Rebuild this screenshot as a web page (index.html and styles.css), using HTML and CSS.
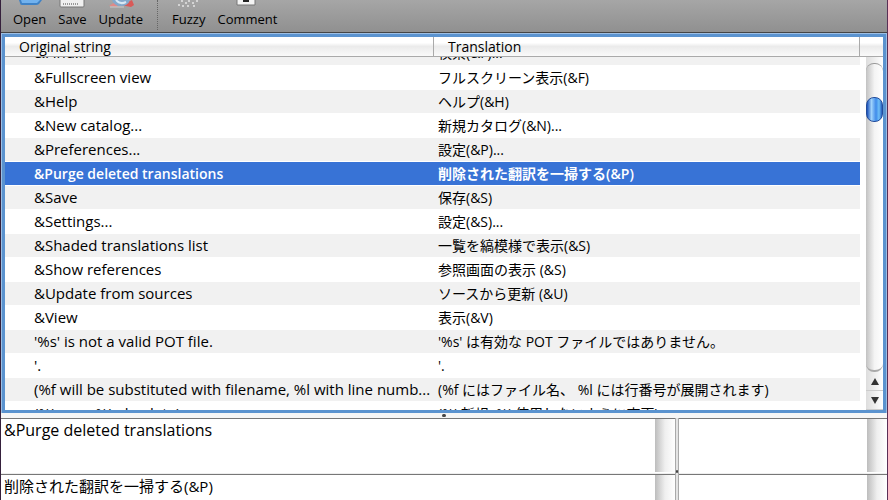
FILE: index.html
```html
<!DOCTYPE html>
<html lang="en">
<head>
<meta charset="utf-8">
<title>Catalog editor</title>
<link rel="stylesheet" href="styles.css">
</head>
<body>
<div class="window">
  <header class="toolbar">
    <button class="tool"><svg width="28" height="9" viewBox="1 0 28 9"><path d="M4 0H27L24 4Q23 5 21 5H7Q5 5 5 3Z" fill="#3f82c6"/><path d="M6 0H25L22 3H7Z" fill="#72b2ee"/></svg><span>Open</span></button>
    <button class="tool"><svg width="28" height="9" viewBox="1 0 28 9"><path d="M3 -1H27V6Q27 7 26 7H4Q3 7 3 6Z" fill="#f0f0f0" stroke="#777"/><path d="M6 4H21" stroke="#999" stroke-width="2" stroke-dasharray="1 1"/></svg><span>Save</span></button>
    <button class="tool"><svg width="28" height="9" viewBox="1 0 28 9"><path d="M15 5L26 0L28 5L25 7Z" fill="#d95a58"/><path d="M3 6L9 2L12 7Z" fill="#e08a88"/><path d="M6 0H24Q22 6 15 6Q8 6 6 0Z" fill="#83a9cc"/><path d="M10 0Q14 5 20 2" stroke="#d8e8f4" fill="none" stroke-width="2"/><path d="M4 7H18" stroke="#ccc"/></svg><span>Update</span></button>
    <span class="divider"></span>
    <button class="tool"><svg width="28" height="9" viewBox="1 0 28 9"><g fill="#e4e4e4"><circle cx="8" cy="1" r="1"/><circle cx="12" cy="3" r="1"/><circle cx="15" cy="1" r="1"/><circle cx="19" cy="3" r="1"/><circle cx="23" cy="1" r="1"/><circle cx="5" cy="5" r="1"/><circle cx="9" cy="6" r="1"/><circle cx="14" cy="6" r="1"/><circle cx="20" cy="6" r="1"/></g></svg><span>Fuzzy</span></button>
    <button class="tool"><svg width="28" height="9" viewBox="1 0 28 9"><path d="M5 -1H23V5H5Z" fill="#f4f4f4" stroke="#777"/><path d="M11 1H17" stroke="#222" stroke-width="2"/></svg><span>Comment</span></button>
  </header>
  <main class="catalog">
    <div class="heading"><span>Original string</span><span>Translation</span><span></span></div>
    <div class="list">
      <div class="rows">
        <table>
          <tr><td>&amp;Find...</td><td lang="ja">検索(&amp;F)...</td></tr>
          <tr><td>&amp;Fullscreen view</td><td lang="ja">フルスクリーン表示(&amp;F)</td></tr>
          <tr><td>&amp;Help</td><td lang="ja">ヘルプ(&amp;H)</td></tr>
          <tr><td>&amp;New catalog...</td><td lang="ja">新規カタログ(&amp;N)...</td></tr>
          <tr><td>&amp;Preferences...</td><td lang="ja">設定(&amp;P)...</td></tr>
          <tr class="selected"><td>&amp;Purge deleted translations</td><td lang="ja">削除された翻訳を一掃する(&amp;P)</td></tr>
          <tr><td>&amp;Save</td><td lang="ja">保存(&amp;S)</td></tr>
          <tr><td>&amp;Settings...</td><td lang="ja">設定(&amp;S)...</td></tr>
          <tr><td>&amp;Shaded translations list</td><td lang="ja">一覧を縞模様で表示(&amp;S)</td></tr>
          <tr><td>&amp;Show references</td><td lang="ja">参照画面の表示 (&amp;S)</td></tr>
          <tr><td>&amp;Update from sources</td><td lang="ja">ソースから更新 (&amp;U)</td></tr>
          <tr><td>&amp;View</td><td lang="ja">表示(&amp;V)</td></tr>
          <tr><td>'%s' is not a valid POT file.</td><td lang="ja">'%s' は有効な POT ファイルではありません。</td></tr>
          <tr><td>'.</td><td lang="ja">'.</td></tr>
          <tr><td>(%f will be substituted with filename, %l with line numb...</td><td lang="ja">(%f にはファイル名、 %l には行番号が展開されます)</td></tr>
          <tr><td>(%i new, %i obsolete)</td><td lang="ja">(%i 新規, %i 使用しないように変更)</td></tr>
        </table>
      </div>
      <div class="scrollbar">
        <div class="track"><div class="thumb"></div></div>
        <button class="arrow" aria-label="Scroll up"><svg width="8" height="7" viewBox="0 0 8 7"><path d="M4 0L8 7H0Z" fill="#333"/></svg></button>
        <button class="arrow" aria-label="Scroll down"><svg width="8" height="7" viewBox="0 0 8 7"><path d="M0 0H8L4 7Z" fill="#333"/></svg></button>
      </div>
    </div>
  </main>
  <div class="splitter"><i class="grip"></i></div>
  <section class="editors">
    <div class="column">
      <div class="field"><textarea class="source" aria-label="Original string" readonly>&amp;Purge deleted translations</textarea><div class="gutter"></div></div>
      <div class="field"><textarea aria-label="Translation" lang="ja">削除された翻訳を一掃する(&amp;P)</textarea><div class="gutter"></div></div>
    </div>
    <div class="sash"><i class="grip"></i></div>
    <div class="column side">
      <div class="field"><textarea aria-label="Automatic comments" readonly></textarea><div class="gutter"></div></div>
      <div class="field"><textarea aria-label="Comment"></textarea><div class="gutter"></div></div>
    </div>
  </section>
</div>
</body>
</html>
```
FILE: styles.css
```css
* { box-sizing: border-box; }
body {
  margin: 0;
  font: 14px/24px "Open Sans", "Noto Sans CJK JP", sans-serif;
  color: #000;
}
button { border: 0; padding: 0; background: none; font: inherit; color: inherit; }
svg { display: block; }
.window {
  display: flex;
  flex-direction: column;
  height: 100vh;
  overflow: hidden;
  background: #efefef;
  border-left: 1px solid #35203c;
  border-right: 1px solid #5a2f55;
}
.toolbar {
  display: flex;
  flex: none;
  gap: 12px;
  height: 33px;
  padding-left: 12px;
  background: linear-gradient(#a6a6a6, #909090);
  border-bottom: 1px solid #454545;
  font-size: 13px;
  line-height: 20px;
}
.tool { display: flex; flex-direction: column; align-items: center; }
.divider { border-left: 1px dotted #666; margin: 0 2px 2px; }
.catalog {
  flex: 0 0 379px;
  min-height: 0;
  display: flex;
  flex-direction: column;
  margin: 1px 1px 0;
  border: 3px solid #5b93cf;
  box-shadow: 0 0 0 1px #9dbfe4;
  background: #fff;
}
.heading {
  display: grid;
  flex: none;
  grid-template-columns: 429px 1fr 23px;
  height: 20px;
  line-height: 20px;
  font-size: 14px;
  background: linear-gradient(#fff 0 30%, #ebebeb 50%, #fafafa);
  border-bottom: 1px solid #aaa;
}
.heading span { padding-left: 14px; border-right: 1px solid #aaa; }
.heading span:last-child { border: 0; padding: 0; }
.list { flex: 1; display: flex; min-height: 0; }
.rows { flex: 1; overflow: hidden; margin-right: 6px; }
table { width: 100%; margin-top: -16px; border-collapse: collapse; table-layout: fixed; }
td { height: 24px; padding: 0; line-height: 23px; border-bottom: 1px solid #fff; white-space: nowrap; }
td:first-child { width: 433px; padding-left: 29px; font-size: 15px; }
tr:nth-child(odd) { background: #f1f1f1; }
tr.selected { background: #3873d6; color: #fff; font-weight: 600; }
tr.selected td:first-child { font-size: 14px; }
.scrollbar {
  display: flex;
  flex-direction: column;
  width: 17px;
  background: linear-gradient(90deg, #ddd, #fff);
}
.track {
  flex: 1;
  margin-top: 6px;
  padding-top: 33px;
  border-radius: 8px;
  border-top: 1px solid #999;
  border-bottom: 2px solid #aaa;
  background: linear-gradient(90deg, #c2c2c2, #f4f4f4 50%, #fff);
}
.thumb {
  height: 25px;
  border: 1px solid #244d9b;
  border-radius: 8px;
  background: linear-gradient(90deg, #1a4fb8, #9fd2fb 30%, #3f8bea 60%, #6fc0f8 80%, #2458b8);
}
.arrow { display: grid; flex: none; place-items: center; height: 19px; border-bottom: 1px solid #ccc; }
.splitter { display: grid; place-items: center; flex: 0 0 5px; background: #f6f6f6; }
.grip { width: 4px; height: 3px; border-radius: 2px; background: #444; }
.editors { flex: 1; display: flex; min-height: 0; }
.column { flex: 1; display: grid; grid-template-rows: 56px 56px; min-width: 0; }
.side { flex: 0 0 208px; }
.sash {
  display: flex;
  flex-direction: column;
  width: 4px;
  padding-top: 52px;
  background: #e4e4e4;
  border-left: 1px solid #aaa;
  border-right: 1px solid #aaa;
}
.sash .grip { width: 2px; }
.field { display: flex; border-top: 1px solid #777; border-bottom: 1px solid #eee; background: #fff; }
textarea {
  flex: 1;
  min-width: 0;
  border: 0;
  outline: 0;
  padding: 0 3px;
  resize: none;
  overflow: hidden;
  background: #fff;
  font: 15px/22px "Open Sans", "Noto Sans CJK JP", sans-serif;
}
.source { font-size: 16px; }
.gutter { width: 20px; margin-bottom: 1px; background: linear-gradient(90deg, #bdbdbd, #efefef 50%, #fff); }
```
